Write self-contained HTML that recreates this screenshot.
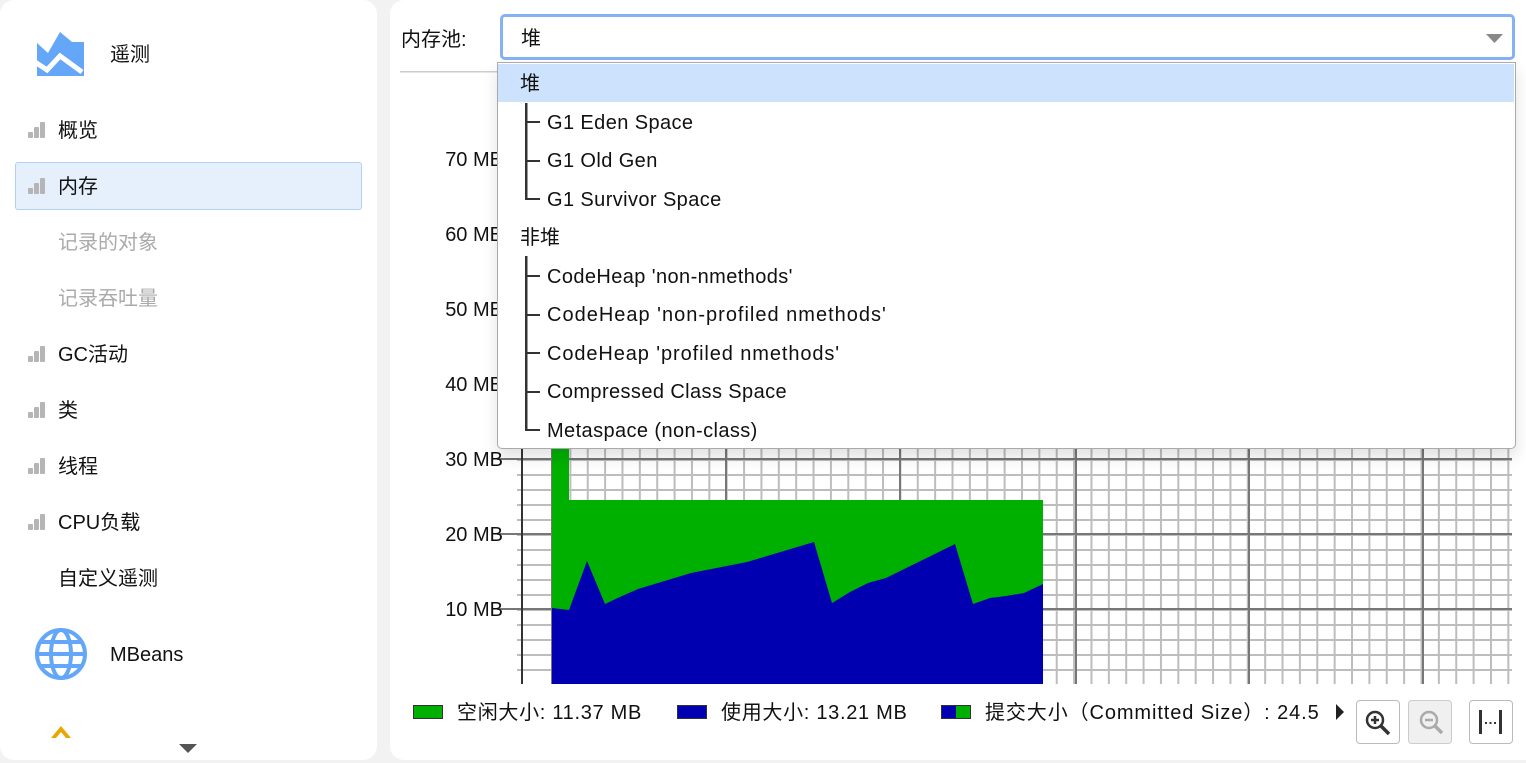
<!DOCTYPE html>
<html><head><meta charset="utf-8"><style>
*{margin:0;padding:0;box-sizing:border-box}
body{width:1526px;height:763px;background:#f2f2f2;font-family:"Liberation Sans","Noto Sans CJK SC",sans-serif;font-size:20px;color:#111;position:relative;overflow:hidden}
.a{position:absolute;white-space:nowrap;line-height:1}
.card{position:absolute;background:#fff;border-radius:14px}
.bars{position:absolute;width:18px;height:16px}
.bars i{position:absolute;bottom:0;width:5px;background:#b5b5b5;border-radius:1px}
.t{position:absolute;line-height:1;white-space:nowrap;transform:translateY(-50%)}
.dd{letter-spacing:0.4px}
.lg{letter-spacing:0.7px}
.btn{position:absolute;top:700px;width:44px;height:44px;border:1.5px solid #bbb;border-radius:4px;background:#fff}
</style></head><body>
<div class="card" style="left:0;top:0;width:377px;height:760px"></div>
<div class="card" style="left:390px;top:0;width:1136px;height:760px;border-radius:14px 0 0 14px"></div>

<!-- sidebar -->
<svg class="a" style="left:36px;top:31px" width="50" height="47" viewBox="36 31 50 47"><path d="M37 43 L48 53 L60 32 L72 42 L84 42 L84 76 L37 76 Z" fill="#64a6f8"/><polyline points="35,62 47,70 60,56 82,72" fill="none" stroke="#fff" stroke-width="5"/></svg>
<div class="t" style="left:110px;top:55px">遥测</div>
<div style="position:absolute;left:15px;top:162px;width:347px;height:48px;background:#e6f0fd;border:1.5px solid #b2d0f8;border-radius:3px"></div>
<div class="bars" style="left:28px;top:122px"><i style="left:0;height:6px"></i><i style="left:6px;height:11px"></i><i style="left:12px;height:16px"></i></div>
<div class="t" style="left:58px;top:131px">概览</div>
<div class="bars" style="left:28px;top:178px"><i style="left:0;height:6px"></i><i style="left:6px;height:11px"></i><i style="left:12px;height:16px"></i></div>
<div class="t" style="left:58px;top:187px">内存</div>
<div class="t" style="left:58px;top:243px;color:#aaa">记录的对象</div>
<div class="t" style="left:58px;top:299px;color:#aaa">记录吞吐量</div>
<div class="bars" style="left:28px;top:346px"><i style="left:0;height:6px"></i><i style="left:6px;height:11px"></i><i style="left:12px;height:16px"></i></div>
<div class="t" style="left:58px;top:355px">GC活动</div>
<div class="bars" style="left:28px;top:402px"><i style="left:0;height:6px"></i><i style="left:6px;height:11px"></i><i style="left:12px;height:16px"></i></div>
<div class="t" style="left:58px;top:411px">类</div>
<div class="bars" style="left:28px;top:458px"><i style="left:0;height:6px"></i><i style="left:6px;height:11px"></i><i style="left:12px;height:16px"></i></div>
<div class="t" style="left:58px;top:467px">线程</div>
<div class="bars" style="left:28px;top:514px"><i style="left:0;height:6px"></i><i style="left:6px;height:11px"></i><i style="left:12px;height:16px"></i></div>
<div class="t" style="left:58px;top:523px">CPU负载</div>
<div class="t" style="left:58px;top:579px">自定义遥测</div>
<svg class="a" style="left:34px;top:627px" width="54" height="54" viewBox="0 0 54 54" fill="none" stroke="#64a6f8" stroke-width="4"><circle cx="27" cy="27" r="24"/><ellipse cx="27" cy="27" rx="10" ry="24"/><line x1="3" y1="27" x2="51" y2="27"/><line x1="7" y1="15" x2="47" y2="15"/><line x1="7" y1="39" x2="47" y2="39"/></svg>
<div class="t" style="left:110px;top:655px">MBeans</div>
<svg class="a" style="left:51px;top:722px" width="20" height="16"><path d="M0 16 L10 4 L20 16 L15 16 L10 10 L5 16 Z" fill="#e8a800"/></svg>
<svg class="a" style="left:179px;top:744px" width="18" height="10"><path d="M0 0 L18 0 L9 9 Z" fill="#555"/></svg>

<!-- chart -->
<svg class="a" style="left:0;top:0" width="1526" height="763">
<defs>
<pattern id="mv" x="552" y="0" width="17.37" height="20" patternUnits="userSpaceOnUse"><rect x="0" y="0" width="2" height="20" fill="#bdbdbd"/></pattern>
<pattern id="mh" x="0" y="684" width="20" height="15" patternUnits="userSpaceOnUse"><rect x="0" y="0" width="20" height="2" fill="#bdbdbd"/></pattern>
</defs>
<rect x="517" y="100" width="995" height="584" fill="url(#mh)"/>
<rect x="552" y="100" width="962" height="584" fill="url(#mv)"/>
<g fill="#777">
<rect x="497" y="158" width="1015" height="2"/><rect x="497" y="233" width="1015" height="2"/><rect x="497" y="308" width="1015" height="2"/><rect x="497" y="383" width="1015" height="2"/><rect x="497" y="458" width="1015" height="2"/><rect x="497" y="533" width="1015" height="2"/><rect x="497" y="608" width="1015" height="2"/>
<rect x="551" y="100" width="2" height="584"/><rect x="725" y="100" width="2" height="584"/><rect x="899" y="100" width="2" height="584"/><rect x="1075" y="100" width="2" height="584"/><rect x="1248" y="100" width="2" height="584"/><rect x="1422" y="100" width="2" height="584"/>
</g>
<rect x="521" y="100" width="2" height="584" fill="#333"/>
<path d="M552 440 L569 440 L569 500 L1043 500 L1043 684 L552 684 Z" fill="#00b000"/>
<path d="M552 608 L569 610 L587 561 L605 604 L622 596 L638 589 L691 573 L747 562 L814 542 L832 603 L850 592 L868 583 L886 578 L955 544 L973 604 L990 598 L1006 596 L1024 593 L1043 584 L1043 684 L552 684 Z" fill="#0000b0"/>
<g font-family="Liberation Sans, sans-serif" font-size="20" fill="#111" text-anchor="end">
<text x="503" y="166">70 MB</text><text x="503" y="241">60 MB</text><text x="503" y="316">50 MB</text><text x="503" y="391">40 MB</text><text x="503" y="466">30 MB</text><text x="503" y="541">20 MB</text><text x="503" y="616">10 MB</text>
</g>
<rect x="400" y="71" width="97" height="1.5" fill="#ccc"/>
</svg>

<!-- top combo -->
<div class="t" style="left:401px;top:40px">内存池:</div>
<div style="position:absolute;left:500px;top:14px;width:1015px;height:46px;border:3px solid #86b2f5;border-radius:5px;background:#fff"></div>
<div class="t" style="left:521px;top:39px">堆</div>
<svg class="a" style="left:1486px;top:34px" width="17" height="10"><path d="M0 0 L17 0 L8.5 9 Z" fill="#888"/></svg>

<!-- dropdown -->
<div style="position:absolute;left:497px;top:62px;width:1019px;height:387px;background:#fff;border:1.5px solid #aaa;border-radius:0 0 5px 5px;box-shadow:0 8px 16px rgba(0,0,0,0.12)">
<div style="position:absolute;left:0;top:1px;width:1016px;height:38px;background:#cde2fc"></div>
</div>
<svg class="a" style="left:0;top:0" width="1526" height="763" fill="#333">
<rect x="525" y="103" width="2.5" height="97"/><rect x="525" y="121" width="15" height="2"/><rect x="525" y="160" width="15" height="2"/><rect x="525" y="198" width="15" height="2"/>
<rect x="525" y="256" width="2.5" height="175"/><rect x="525" y="275" width="15" height="2"/><rect x="525" y="314" width="15" height="2"/><rect x="525" y="352" width="15" height="2"/><rect x="525" y="391" width="15" height="2"/><rect x="525" y="429" width="15" height="2"/>
</svg>
<div class="t" style="left:520px;top:84px">堆</div>
<div class="t dd" style="left:547px;top:123px">G1 Eden Space</div>
<div class="t dd" style="left:547px;top:161px">G1 Old Gen</div>
<div class="t dd" style="left:547px;top:200px">G1 Survivor Space</div>
<div class="t" style="left:520px;top:238px">非堆</div>
<div class="t dd" style="left:547px;top:277px">CodeHeap 'non-nmethods'</div>
<div class="t dd" style="left:547px;top:315px;letter-spacing:1px">CodeHeap 'non-profiled nmethods'</div>
<div class="t dd" style="left:547px;top:354px;letter-spacing:0.9px">CodeHeap 'profiled nmethods'</div>
<div class="t dd" style="left:547px;top:392px">Compressed Class Space</div>
<div class="t dd" style="left:547px;top:431px">Metaspace (non-class)</div>

<!-- legend -->
<div style="position:absolute;left:413px;top:705px;width:30px;height:14px;background:#00b000;border:1.5px solid #333"></div>
<div class="t lg" style="left:457px;top:713px">空闲大小: 11.37 MB</div>
<div style="position:absolute;left:677px;top:705px;width:30px;height:14px;background:#0000b0;border:1.5px solid #333"></div>
<div class="t lg" style="left:721px;top:713px">使用大小: 13.21 MB</div>
<div style="position:absolute;left:941px;top:705px;width:30px;height:14px;background:linear-gradient(90deg,#0000b0 50%,#00b000 50%);border:1.5px solid #333"></div>
<div class="t lg" style="left:985px;top:713px;letter-spacing:0.9px">提交大小（Committed Size）: 24.5</div>
<svg class="a" style="left:1335px;top:703px" width="10" height="18"><path d="M1 1 L9 9 L1 17 Z" fill="#222"/></svg>
<div class="btn" style="left:1356px"><svg width="41" height="41" viewBox="0 0 41 41" fill="none" stroke="#333" stroke-width="2.5"><circle cx="18" cy="19" r="8"/><line x1="24" y1="25" x2="32" y2="33" stroke-width="3.5"/><line x1="14" y1="19" x2="22" y2="19"/><line x1="18" y1="15" x2="18" y2="23"/></svg></div>
<div class="btn" style="left:1408px;background:#f0f0f0;border-color:#ccc"><svg width="41" height="41" viewBox="0 0 41 41" fill="none" stroke="#aaa" stroke-width="2.5"><circle cx="20" cy="19" r="8"/><line x1="26" y1="25" x2="33" y2="32" stroke-width="3.5"/><line x1="16" y1="19" x2="24" y2="19"/></svg></div>
<div class="btn" style="left:1469px"><svg width="41" height="41" viewBox="0 0 41 41" fill="#333"><rect x="9" y="9" width="3" height="24"/><rect x="29" y="9" width="3" height="24"/><rect x="15" y="21" width="2" height="2"/><rect x="19.5" y="21" width="2" height="2"/><rect x="24" y="21" width="2" height="2"/></svg></div>
</body></html>
